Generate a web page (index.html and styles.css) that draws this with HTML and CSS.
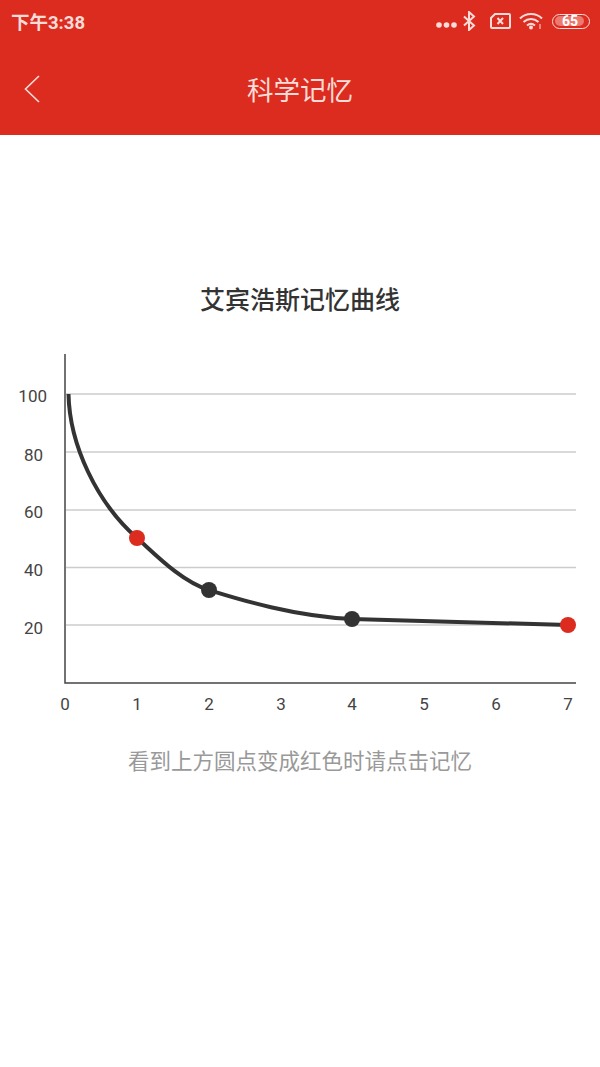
FILE: index.html
```html
<!DOCTYPE html>
<html lang="zh">
<head>
    <meta charset="UTF-8">
    <meta name="viewport" content="width=device-width, initial-scale=1.0">
    <title>科学记忆</title>
    <link rel="stylesheet" href="styles.css">
</head>
<body>
    <header class="app-header">
        <div class="status-bar">
            <span class="status-time">下午3:38</span>
            <div class="status-icons">
                <svg class="icon-dots" width="21" height="6" viewBox="0 0 21 6"><circle cx="3" cy="3" r="2.800"/><circle cx="10.500" cy="3" r="2.800"/><circle cx="18" cy="3" r="2.800"/></svg>
                <svg class="icon-bluetooth" width="14" height="20" viewBox="0 0 14 20"><path d="M2 5.500l10 9-5 4.500V1l5 4.500-10 9"/></svg>
                <svg class="icon-sim" width="21" height="16" viewBox="0 0 21 16"><path d="M5 1h14a1 1 0 0 1 1 1v12a1 1 0 0 1-1 1H2a1 1 0 0 1-1-1V5z"/><path d="M7.500 5l5.500 6m0-6l-5.500 6"/></svg>
                <svg class="icon-wifi" width="24" height="18" viewBox="0 0 24 18"><path d="M1 6.500c6-6 16-6 22 0"/><path d="M4.500 10c4.500-4 10.500-4 15 0"/><path d="M8 13.500c2.500-2 5.500-2 8 0"/><circle cx="12" cy="15.500" r="2" class="icon-fill"/><path class="icon-signal" d="M21 12v5"/></svg>
                <div class="battery"><div class="battery-level"></div><span class="battery-text">65</span></div>
            </div>
        </div>
        <div class="nav-bar">
            <a class="back-btn" href="#">
                <svg width="16" height="28" viewBox="0 0 16 28"><path d="M15 1L1.500 14 15 27"/></svg>
            </a>
            <h1>科学记忆</h1>
        </div>
    </header>

    <main class="content">
        <h2 class="chart-title">艾宾浩斯记忆曲线</h2>

        <svg class="chart" width="600" height="380" viewBox="0 350 600 380">
            <g class="grid">
                <line x1="66" y1="394" x2="576" y2="394"/>
                <line x1="66" y1="452" x2="576" y2="452"/>
                <line x1="66" y1="510" x2="576" y2="510"/>
                <line x1="66" y1="567.500" x2="576" y2="567.500"/>
                <line x1="66" y1="625" x2="576" y2="625"/>
            </g>
            <path class="axis" d="M65 354V683H576"/>
            <path class="curve" d="M68.500 394C69.500 445 97 503 137 538C152 551 180 581 209 590C232 597 290 616 352 619L568 625"/>
            <circle class="dot dot-active" cx="137" cy="538" r="8"/>
            <circle class="dot" cx="209" cy="590" r="8"/>
            <circle class="dot" cx="352" cy="619" r="8"/>
            <circle class="dot dot-active" cx="568" cy="625" r="8"/>
            <g class="labels-y">
                <text x="47" y="402">100</text>
                <text x="43" y="461">80</text>
                <text x="43" y="518">60</text>
                <text x="43" y="576">40</text>
                <text x="43" y="634">20</text>
            </g>
            <g class="labels-x">
                <text x="65" y="710">0</text>
                <text x="137" y="710">1</text>
                <text x="209" y="710">2</text>
                <text x="281" y="710">3</text>
                <text x="352" y="710">4</text>
                <text x="424" y="710">5</text>
                <text x="496" y="710">6</text>
                <text x="568" y="710">7</text>
            </g>
        </svg>

        <p class="hint">看到上方圆点变成红色时请点击记忆</p>
    </main>
</body>
</html>
```

FILE: styles.css
```css
* {
    margin: 0;
    padding: 0;
    box-sizing: border-box;
}

body {
    font-family: Roboto, "Noto Sans CJK SC", sans-serif;
    background-color: #fff;
    color: #333;
}

.app-header {
    height: 135px;
    background: #dc2c1f;
    color: #fbdcd8;
}

.status-bar {
    display: flex;
    align-items: center;
    justify-content: space-between;
    height: 42px;
    padding: 0 10px 0 11px;
}

.status-time {
    font-size: 18.500px;
    font-weight: 700;
}

.status-icons {
    display: flex;
    align-items: center;
}

.status-icons svg {
    fill: none;
    stroke: #fbdcd8;
    stroke-width: 2;
}

.status-icons .icon-dots {
    fill: #fbdcd8;
    stroke: none;
    margin: 8px 5px 0 0;
}

.status-icons .icon-fill {
    fill: #fbdcd8;
    stroke: none;
}

.status-icons .icon-signal {
    stroke-width: 1;
}

.icon-sim {
    margin: 0 8px 0 14px;
}

.icon-wifi {
    margin-right: 9px;
}

.battery {
    position: relative;
    width: 38px;
    height: 15px;
    padding: 1.500px;
    border: 1.500px solid #fbdcd8;
    border-radius: 8px;
    overflow: hidden;
}

.battery-level {
    width: 88%;
    height: 100%;
    border-radius: 5px;
    background: #ec7a70;
}

.battery-text {
    position: absolute;
    top: 0;
    left: 0;
    width: 34px;
    text-align: center;
    font-size: 14px;
    font-weight: 700;
    line-height: 12px;
    color: #fff;
}

.nav-bar {
    position: relative;
    display: flex;
    align-items: center;
    justify-content: center;
    height: 93px;
}

.nav-bar h1 {
    font-size: 26.500px;
    font-weight: 400;
}

.back-btn {
    position: absolute;
    left: 24px;
    top: 33px;
}

.back-btn svg {
    display: block;
    fill: none;
    stroke: #fbdcd8;
    stroke-width: 1.600;
}

.content {
    display: flex;
    flex-direction: column;
    align-items: center;
}

.chart-title {
    margin-top: 149px;
    font-size: 25px;
    font-weight: 500;
    line-height: 34px;
    color: #333;
}

.chart {
    display: block;
    margin-top: 32px;
}

.grid line {
    stroke: #cccccc;
    stroke-width: 1.500;
}

.axis {
    fill: none;
    stroke: #444;
    stroke-width: 1.500;
}

.curve {
    fill: none;
    stroke: #333;
    stroke-width: 4;
}

.dot {
    fill: #333;
}

.dot-active {
    fill: #dc2c1f;
}

.chart text {
    font-size: 17px;
    fill: #444;
}

.labels-y text {
    text-anchor: end;
}

.labels-x text {
    text-anchor: middle;
}

.hint {
    margin-top: 18px;
    font-size: 21.500px;
    line-height: 28px;
    color: #999;
}
```
